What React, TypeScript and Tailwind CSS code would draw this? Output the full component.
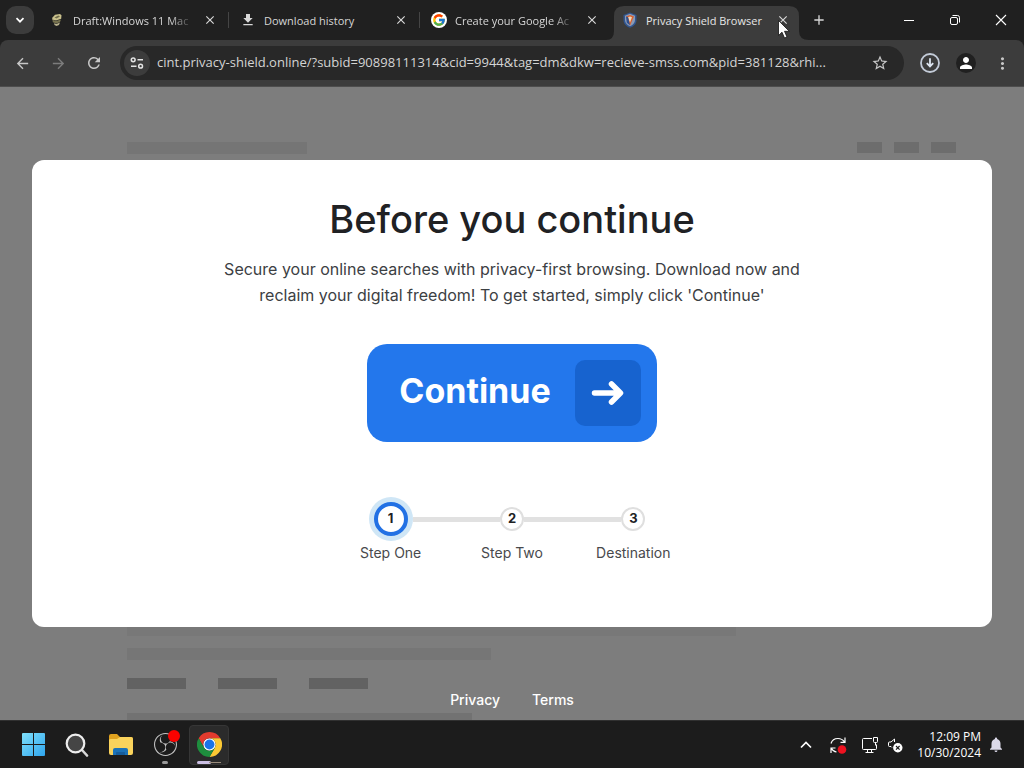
import type { ReactNode } from "react";
import {
  MdArrowBack,
  MdArrowForward,
  MdRefresh,
  MdStarBorder,
  MdPerson,
  MdMoreVert,
  MdDownload,
  MdClose,
  MdAdd,
  MdNotifications,
} from "react-icons/md";
import { FcGoogle } from "react-icons/fc";
import { SiObsstudio } from "react-icons/si";

const ui = "font-['Open_Sans','Noto_Sans',sans-serif]";
const body = "font-['Inter',sans-serif]";

function WikiIcon() {
  return (
    <svg viewBox="0 0 16 16" className="size-4" aria-hidden="true">
      <path d="M3.500 5.500 6 2.800 11 2 12.500 3.200 12.200 6.800 7 8.500 3 7.600Z" fill="#c9c08c" />
      <path d="M3.500 7.800 7 9 12 7.400 11 10 7.600 11.400 3.800 10.200Z" fill="#77734f" />
      <path d="M5 11.200 7.500 12 11 10.600 10 13 7.500 14 5.500 13Z" fill="#b8b18b" />
      <path d="M5.500 5.600 9.300 3.600 11 4.400 7.500 6.400Z" fill="#6f6b4a" />
    </svg>
  );
}

function ShieldIcon() {
  return (
    <svg viewBox="0 0 16 16" className="size-4" aria-hidden="true">
      <path d="M8 0.5 14.5 3V8C14.5 12 11.5 14.6 8 15.8 4.5 14.6 1.5 12 1.5 8V3Z" fill="#31558f" />
      <path d="M8 1.8 13 3.8V8C13 11 10.8 13.2 8 14.3 5.2 13.2 3 11 3 8V3.8Z" fill="#8a9bb5" />
      <path d="M8 3 12 4.6 8 13.4 4 4.6Z" fill="#d8602f" />
      <path d="M8 4.4 10 5.2 8 10.5 6 5.2Z" fill="#f0d8b8" />
      <path d="M4 4.6 6 5 8 13.2 4.8 10.8Z" fill="#2d4f8e" />
    </svg>
  );
}

function Tab({ icon, title, active, fade, divider }: { icon: ReactNode; title: string; active?: boolean; fade?: boolean; divider?: boolean }) {
  return (
    <div className="relative flex h-10 w-[191px] min-w-0 items-end">
      {active && (
        <svg viewBox="0 0 203 34" preserveAspectRatio="none" className="absolute -left-[5px] bottom-0 h-[34px] w-[203px]" aria-hidden="true">
          <path d="M0 34Q8 34 8 25V10Q8 0 18 0H183Q193 0 193 10V25Q193 34 203 34Z" fill="#3c3c3c" />
        </svg>
      )}
      <div className="relative flex h-10 w-full min-w-0 items-center gap-2 pr-[11px] pl-[11px]">
        <span className="flex size-4 shrink-0 items-center justify-center">{icon}</span>
        <span
          className={
            "min-w-0 flex-1 overflow-hidden pt-px text-[11px] leading-[18px] whitespace-nowrap " +
            (active ? "text-[#e6e6e6]" : "text-[#d6d6d6]") +
            (fade ? " mask-r-from-80% mask-r-to-100%" : "")
          }
        >
          {title}
        </span>
        <button aria-label={"Close " + title} className="flex size-4 shrink-0 items-center justify-center text-[#d8d8d8]">
          <MdClose className="size-[14px]" />
        </button>
      </div>
      {divider && <span className="absolute top-3 right-0 h-4 w-px bg-[#454545]" />}
    </div>
  );
}

function TabStrip() {
  return (
    <header className="flex h-10 items-center bg-[#202020]">
      <button aria-label="Search tabs" className="mr-1 ml-[6px] flex size-7 items-center justify-center rounded-[10px] bg-[#3c3c3c] text-white">
        <svg viewBox="0 0 10 10" className="size-[10px]" fill="none" stroke="currentColor" strokeWidth="1.7" aria-hidden="true">
          <path d="M1.5 3.2 5 6.7 8.5 3.2" />
        </svg>
      </button>
      <Tab icon={<WikiIcon />} title="Draft:Windows 11 Mac" fade divider />
      <Tab icon={<MdDownload className="size-[18px] text-[#d8d8d8]" />} title="Download history" divider />
      <Tab
        icon={
          <span className="flex size-4 shrink-0 items-center justify-center rounded-full bg-white">
            <FcGoogle className="size-[14px]" />
          </span>
        }
        title="Create your Google Ac"
        fade
      />
      <Tab icon={<ShieldIcon />} title="Privacy Shield Browser" active />
      <button aria-label="New tab" className="ml-[3px] flex size-7 items-center justify-center text-[#d8d8d8]">
        <MdAdd className="size-4" />
      </button>
      <div className="ml-auto flex h-10 text-white">
        <button aria-label="Minimize" className="flex w-[46px] items-center justify-center">
          <span className="h-px w-[10px] bg-white" />
        </button>
        <button aria-label="Restore" className="flex w-[46px] items-center justify-center">
          <svg viewBox="0 0 12 12" className="size-3" fill="none" stroke="currentColor" aria-hidden="true">
            <rect x="1.5" y="3.5" width="7" height="7" rx="1.5" />
            <path d="M3.5 1.5H8.5Q10.5 1.5 10.5 3.5V8.5" />
          </svg>
        </button>
        <button aria-label="Close window" className="flex w-[46px] items-center justify-center">
          <svg viewBox="0 0 12 12" className="size-3" fill="none" stroke="currentColor" strokeWidth="1.1" aria-hidden="true">
            <path d="M1 1 11 11M11 1 1 11" />
          </svg>
        </button>
      </div>
    </header>
  );
}

function Toolbar() {
  return (
    <div className="bg-[#202020]">
      <div className="flex h-[47px] items-center rounded-t-lg border-b border-[#4d4d4d] bg-[#3c3c3c] pr-2 pl-2 text-[#c7c7c7]">
        <nav className="flex gap-2">
          <button aria-label="Back" className="flex size-7 items-center justify-center">
            <MdArrowBack className="size-[17px]" />
          </button>
          <button aria-label="Forward" className="flex size-7 items-center justify-center text-[#7c7c7c]">
            <MdArrowForward className="size-[17px]" />
          </button>
          <button aria-label="Reload" className="flex size-7 items-center justify-center">
            <MdRefresh className="size-[18px]" />
          </button>
        </nav>
        <div className="ml-3 flex h-[34px] min-w-0 flex-1 items-center rounded-full bg-[#282828] pr-[14px] pl-1">
          <button aria-label="View site information" className="flex size-[26px] shrink-0 items-center justify-center rounded-full bg-[#3c3c3c] text-[#e3e3e3]">
            <svg viewBox="0 0 16 16" className="size-4" fill="none" stroke="currentColor" strokeWidth="1.5" aria-hidden="true">
              <circle cx="4.2" cy="4.8" r="1.9" />
              <path d="M8.5 4.8H14M2 11.2H7.5" />
              <circle cx="11.6" cy="11.2" r="1.9" />
            </svg>
          </button>
          <input
            aria-label="Address"
            className="ml-[7px] min-w-0 flex-1 bg-transparent text-[13px] text-[#d4d4d4] outline-none"
            defaultValue="cint.privacy-shield.online/?subid=90898111314&cid=9944&tag=dm&dkw=recieve-smss.com&pid=381128&rhi..."
          />
          <button aria-label="Bookmark this tab" className="flex size-5 shrink-0 items-center justify-center">
            <MdStarBorder className="size-[18px]" />
          </button>
        </div>
        <div className="ml-3 flex gap-2">
          <button aria-label="Downloads" className="flex size-7 items-center justify-center">
            <svg viewBox="0 0 20 20" className="size-5" fill="none" aria-hidden="true">
              <circle cx="10" cy="10" r="9" stroke="#c3cbd8" strokeWidth="1.8" />
              <path d="M10 5.200V13M6.800 10.200 10 13.400 13.200 10.200" stroke="#dce4ef" strokeWidth="1.8" />
            </svg>
          </button>
          <button aria-label="Profile" className="flex size-7 items-center justify-center">
            <span className="flex size-5 items-center justify-center rounded-full bg-[#202020] text-white">
              <MdPerson className="size-[18px]" />
            </span>
          </button>
          <button aria-label="Menu" className="flex size-7 items-center justify-center">
            <MdMoreVert className="size-[19px]" />
          </button>
        </div>
      </div>
    </div>
  );
}

function Backdrop() {
  return (
    <div className="flex flex-1 flex-col overflow-hidden pt-[55px] pr-[68px] pl-[127px]" aria-hidden="true">
      <div className="flex items-start justify-between">
        <div className="h-3 w-[180px] bg-[#757575]" />
        <div className="flex gap-3">
          <div className="h-[11px] w-[25px] bg-[#6d6d6d]" />
          <div className="h-[11px] w-[25px] bg-[#6d6d6d]" />
          <div className="h-[11px] w-[25px] bg-[#6d6d6d]" />
        </div>
      </div>
      <div className="mt-auto flex flex-col">
        <div className="h-3 w-[609px] bg-[#787878]" />
        <div className="mt-3 h-3 w-[364px] bg-[#767676]" />
        <div className="mt-[18px] flex gap-8">
          <div className="h-[11px] w-[59px] bg-[#626262]" />
          <div className="h-[11px] w-[59px] bg-[#626262]" />
          <div className="h-[11px] w-[59px] bg-[#626262]" />
        </div>
        <div className="mt-6 h-[7px] w-[345px] bg-[#727272]" />
      </div>
    </div>
  );
}

function Step({ n, label, first, last }: { n: number; label: string; first?: boolean; last?: boolean }) {
  return (
    <li className="flex flex-1 flex-col items-center">
      <div className="flex h-11 w-full items-center">
        <span className={first ? "flex-1" : "h-[5px] flex-1 bg-[#e1e1e1]"} />
        {first ? (
          <span className="flex size-11 items-center justify-center rounded-full bg-[#cfe6f6]">
            <span className="flex size-[34px] items-center justify-center rounded-full border-4 border-[#2271e4] bg-white text-[13px] font-bold text-[#202124]">
              {n}
            </span>
          </span>
        ) : (
          <span className="flex size-6 items-center justify-center rounded-full border-2 border-[#dfdfdf] bg-white text-[13px] font-bold text-[#202124]">
            {n}
          </span>
        )}
        <span className={last ? "flex-1" : "h-[5px] flex-1 bg-[#e1e1e1]"} />
      </div>
      <span className="mt-[2px] text-[14px] leading-5 text-[#48494c]">{label}</span>
    </li>
  );
}

function Dialog() {
  return (
    <section role="dialog" aria-labelledby="dialog-title" className="flex flex-col items-center rounded-xl bg-white px-8 pt-[35px] pb-16">
      <h1 id="dialog-title" className="text-[38px] leading-[48px] font-medium text-[#202124]">
        Before you continue
      </h1>
      <p className="mt-[13px] max-w-[600px] text-center text-[16px] leading-[26px] text-[#3c4043]">
        Secure your online searches with privacy-first browsing. Download now and reclaim your digital freedom! To get started, simply click 'Continue'
      </p>
      <button className="mt-9 flex items-center gap-6 rounded-[20px] bg-[#2377ec] p-4 pl-8 text-white">
        <span className="pb-1 text-[34px] leading-[44px] font-bold">Continue</span>
        <span className="flex size-[66px] items-center justify-center rounded-[10px] bg-[#1763cf]">
          <svg viewBox="0 0 34 28" className="h-7 w-[34px]" fill="none" stroke="currentColor" strokeWidth="5.500" strokeLinecap="round" strokeLinejoin="round" aria-hidden="true">
            <path d="M3.500 14H29M20.500 5 29.500 14 20.500 23" />
          </svg>
        </span>
      </button>
      <ol className="mt-[55px] flex w-[364px] max-w-full">
        <Step n={1} label="Step One" first />
        <Step n={2} label="Step Two" />
        <Step n={3} label="Destination" last />
      </ol>
    </section>
  );
}

function ChromeLogo() {
  return (
    <svg viewBox="0 0 48 48" className="size-[25px]" aria-hidden="true">
      <circle cx="24" cy="24" r="12" fill="#fff" />
      <path d="M24,12H44.7812a23.9939,23.9939,0,0,0-41.5639.0029L13.6079,30l.0093-.0024A11.9852,11.9852,0,0,1,24,12Z" fill="#e33b2e" />
      <circle cx="24" cy="24" r="9.5" fill="#1a73e8" />
      <path d="M34.3913,30.0029,24.0007,48A23.994,23.994,0,0,0,44.78,12.0031H23.9989l-.0025.0093A11.985,11.985,0,0,1,34.3913,30.0029Z" fill="#fcc934" />
      <path d="M13.6086,30.0031,3.218,12.006A23.994,23.994,0,0,0,24.0025,48L34.3931,30.0029l-.0067-.0068a11.9852,11.9852,0,0,1-20.7778.007Z" fill="#1e8e3e" />
    </svg>
  );
}

function Taskbar() {
  const slot = "relative flex size-10 items-center justify-center";
  return (
    <footer className="flex h-12 items-center border-t border-[#303030] bg-[#1c1c1c] pr-[19px] pl-[13px]">
      <nav className="flex gap-1">
        <button aria-label="Start" className={slot}>
          <svg viewBox="0 0 23 23" className="size-[23px]" aria-hidden="true">
            <defs>
              <linearGradient id="start" x1="0" y1="0" x2="1" y2="1" gradientUnits="objectBoundingBox">
                <stop offset="0" stopColor="#7fe0fb" />
                <stop offset="1" stopColor="#2fa5ee" />
              </linearGradient>
            </defs>
            <path d="M1 0H11V11H0V1Q0 0 1 0ZM12 0H22Q23 0 23 1V11H12ZM0 12H11V23H1Q0 23 0 22ZM12 12H23V22Q23 23 22 23H12Z" fill="url(#start)" />
          </svg>
        </button>
        <button aria-label="Search" className={slot}>
          <svg viewBox="0 0 24 24" className="size-6" fill="none" aria-hidden="true">
            <path d="M17 17 22 22.500" stroke="#d9d9d9" strokeWidth="2.600" strokeLinecap="round" />
            <circle cx="10.500" cy="10.500" r="8.800" fill="#454545" stroke="#ededed" strokeWidth="2.200" />
          </svg>
        </button>
        <button aria-label="File Explorer" className={slot}>
          <svg viewBox="0 0 26 24" className="h-6 w-[26px]" aria-hidden="true">
            <path d="M1 3Q1 1 3 1H9L12 4H23Q25 4 25 6V12H1Z" fill="#e0a21f" />
            <path d="M1 7Q1 6 3 6H9L12 4H23Q25 4 25 6V20Q25 22 23 22H3Q1 22 1 20Z" fill="#fad35c" />
            <path d="M5 22V17Q5 15 7 15H18Q20 15 20 17V22Z" fill="#1b72b8" />
            <path d="M8 22V20Q8 19 9 19H16Q17 19 17 20V22Z" fill="#165d9c" />
          </svg>
        </button>
        <button aria-label="OBS Studio" className={slot}>
          <SiObsstudio className="size-[23px] text-[#c4c4c4]" />
          <span className="absolute top-[5px] right-[5px] size-3 rounded-full bg-[#fb0200]" />
          <span className="absolute bottom-[1px] h-[3px] w-[6px] rounded-full bg-[#9a9a9a]" />
        </button>
        <button aria-label="Google Chrome" className={slot + " rounded border border-[#363636] bg-[#2b2b2b]"}>
          <ChromeLogo />
          <span className="absolute bottom-0 left-[7px] h-[3px] w-[14px] rounded-full bg-[#cbbfe3]" />
          <span className="absolute right-[7px] bottom-[1px] h-px w-3 bg-[#9a8c7c]" />
        </button>
      </nav>
      <div className="ml-auto flex items-center text-white">
        <button aria-label="Show hidden icons" className="flex w-8 items-center justify-center">
          <svg viewBox="0 0 12 8" className="h-2 w-3" fill="none" stroke="currentColor" strokeWidth="1.700" aria-hidden="true">
            <path d="M1 6.500 6 1.500 11 6.500" />
          </svg>
        </button>
        <button aria-label="Updates" className="flex w-8 items-center justify-center">
          <svg viewBox="0 0 18 18" className="size-[18px]" fill="none" stroke="currentColor" strokeWidth="1.200" aria-hidden="true">
            <path d="M2 7.500Q3.500 2.500 9 2.500 13 2.500 15.500 6M16 1.500V6.300H11.500M2 17V12H6.500M2.500 12.500Q4 15.500 7.500 16" />
            <circle cx="13" cy="13.500" r="4.300" fill="#ee1220" stroke="none" />
          </svg>
        </button>
        <button aria-label="Network and volume" className="flex items-center gap-2 pl-[7px]">
          <svg viewBox="0 0 18 18" className="size-[18px]" fill="none" stroke="currentColor" aria-hidden="true">
            <path d="M11 2.500H2.500Q1.500 2.500 1.500 3.500V12.500Q1.500 13.500 2.500 13.500H14.500Q15.500 13.500 15.500 12.500V8.500M6.500 13.500V16.500M10.500 13.500V16.500M4.500 16.500H12.500" />
            <path d="M12.500 1.500H16.500V5.500Q16.500 6.500 15.500 6.500H13.500Q12.500 6.500 12.500 5.500ZM14.500 6.500V9.500" />
          </svg>
          <svg viewBox="0 0 16 16" className="size-4" fill="none" stroke="currentColor" aria-hidden="true">
            <path d="M7.500 5V2L4 5H2.500Q1.500 5 1.500 6V8.500Q1.500 9.500 2.500 9.500H4L5 10.500" />
            <circle cx="10.800" cy="10.800" r="4.700" fill="#fff" stroke="none" />
            <path d="M9 9 12.600 12.600M12.600 9 9 12.600" stroke="#1c1c1c" strokeWidth="1.200" />
          </svg>
        </button>
        <button className="ml-[14px] text-right text-[12px] leading-4">
          <time className="block">12:09 PM</time>
          <time className="block">10/30/2024</time>
        </button>
        <button aria-label="Notifications" className="ml-[6px] flex w-[18px] items-center justify-center text-[#dcdaea]">
          <MdNotifications className="size-[19px]" />
        </button>
      </div>
    </footer>
  );
}

export default function App() {
  return (
    <div className={"relative flex min-h-screen flex-col bg-[#7d7d7d] " + ui}>
      <TabStrip />
      <Toolbar />
      <main className={"relative flex flex-1 flex-col " + body}>
        <Backdrop />
        <div className="absolute inset-0 flex flex-col px-8 pt-[73px]">
          <Dialog />
          <nav className="mt-auto flex justify-center gap-8 pb-[10px] text-[14px] leading-5 font-medium text-white">
            <a href="#privacy">Privacy</a>
            <a href="#terms">Terms</a>
          </nav>
        </div>
      </main>
      <Taskbar />
      <svg viewBox="0 0 12 19" className="absolute top-5 left-[778px] h-[19px] w-3" aria-hidden="true">
        <path d="M0.500 0.500V15.500L4 12.200 6.500 18 9 17 6.500 11.300H11.300Z" fill="#fff" stroke="#111" strokeWidth="0.800" />
      </svg>
    </div>
  );
}
